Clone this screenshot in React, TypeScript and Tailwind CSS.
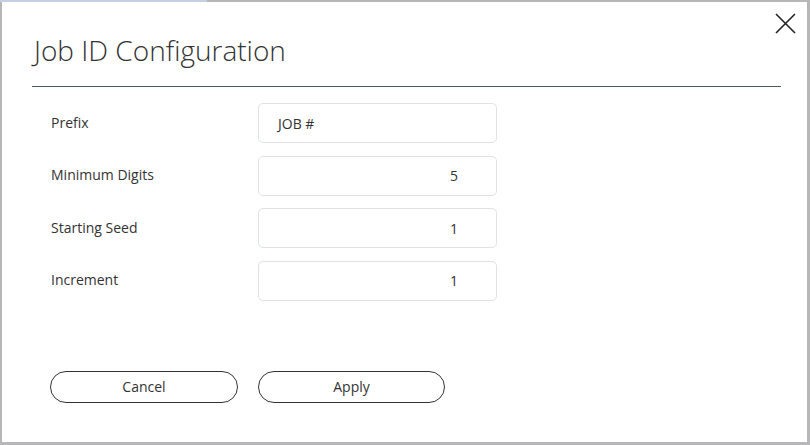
const fields = [
  { label: "Prefix", value: "JOB #", align: "left" },
  { label: "Minimum Digits", value: "5", align: "right" },
  { label: "Starting Seed", value: "1", align: "right" },
  { label: "Increment", value: "1", align: "right" },
];

export default function App() {
  return (
    <div className="w-[810px] h-[445px] pt-[2px] pl-[2px] pr-[3px] pb-[3px] bg-[#b7b7b9] bg-[linear-gradient(to_right,#c5cfe1_207px,transparent_207px)] bg-no-repeat bg-[length:100%_2px] font-['Open_Sans',sans-serif]">
      <div className="h-full bg-white flex flex-col">
        <div className="flex items-start pl-[32px] pr-[11px] pt-[11px]">
          <h1 className="flex-1 pt-[19px] text-[28px] leading-[36px] font-light text-[#333]">
            Job ID Configuration
          </h1>
          <button className="text-[#222]">
            <svg width="21" height="21" viewBox="0 0 21 21" fill="none" stroke="currentColor" strokeWidth="1.6">
              <path d="M1 1L20 20M20 1L1 20" />
            </svg>
          </button>
        </div>
        <div className="mx-[30px] mt-[18px] h-px bg-[#4b5b5b] w-[749px]" />
        <div className="flex flex-col gap-[12.5px] mt-[16px] pl-[49px]">
          {fields.map((f) => (
            <div key={f.label} className="flex items-center">
              <div className="w-[207px] text-[14px] text-[#333] -mt-[2px]">{f.label}</div>
              <div
                className={`w-[239px] h-[40px] border border-[#dfe3e6] rounded-[5px] flex items-center text-[14px] text-[#333] ${
                  f.align === "left" ? "pl-[19px]" : "justify-end pr-[38px]"
                }`}
              >
                {f.value}
              </div>
            </div>
          ))}
        </div>
        <div className="flex gap-[20px] pl-[48px] mt-[70px]">
          <button className="w-[188px] h-[32px] rounded-full border border-[#333] text-[14px] text-[#333]">
            Cancel
          </button>
          <button className="w-[187px] h-[32px] rounded-full border border-[#333] text-[14px] text-[#333]">
            Apply
          </button>
        </div>
      </div>
    </div>
  );
}
